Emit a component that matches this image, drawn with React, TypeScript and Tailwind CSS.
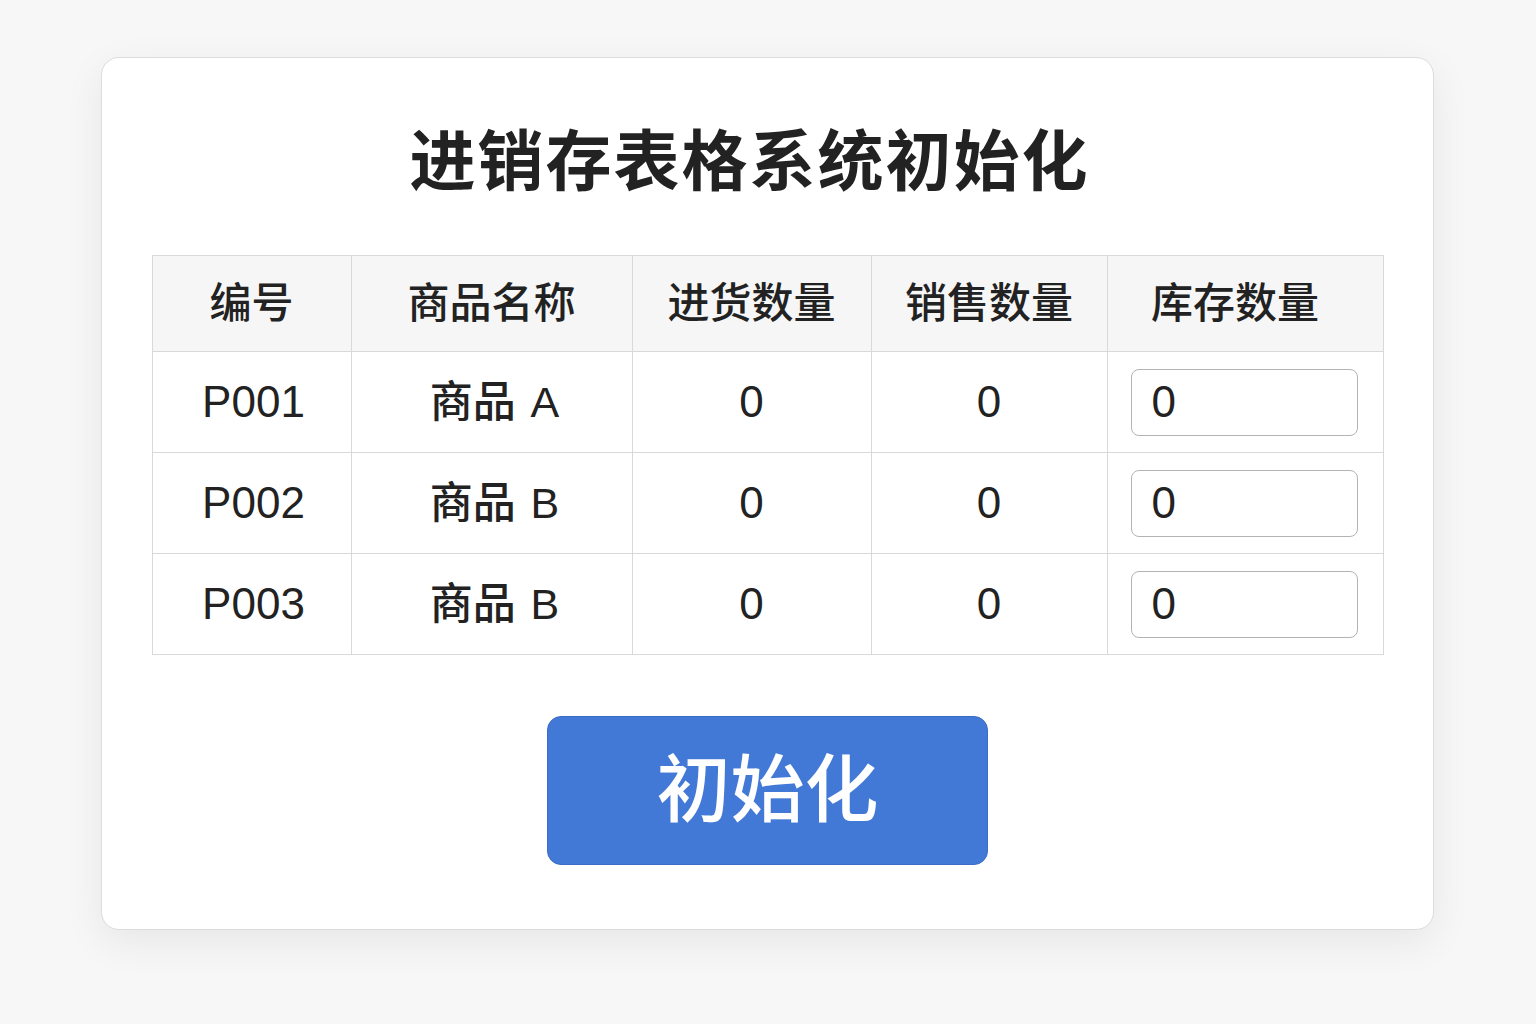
import React from "react";

const font = { fontFamily: '"Liberation Sans", "Noto Sans CJK SC", sans-serif' };

const rows = [
  { id: "P001", name: "商品 A" },
  { id: "P002", name: "商品 B" },
  { id: "P003", name: "商品 B" },
];

const headers = ["编号", "商品名称", "进货数量", "销售数量", "库存数量"];

export default function App() {
  return (
    <div
      className="w-[1536px] h-[1024px] bg-[#f7f7f7] pt-[57px] pl-[101px] text-[#222]"
      style={font}
    >
      <div className="w-[1333px] h-[873px] bg-white rounded-[18px] border border-[#dcdcdc] shadow-[0_12px_40px_rgba(0,0,0,0.07)] pt-[71px] px-[50px] flex flex-col items-center">
        <h1 className="text-[66px] leading-none font-bold tracking-[2px] text-[#222] mb-[60px] mr-[36px]">
          进销存表格系统初始化
        </h1>
        <table className="w-[1231px] border-collapse table-fixed">
          <colgroup>
            <col className="w-[199px]" />
            <col className="w-[281px]" />
            <col className="w-[239px]" />
            <col className="w-[236px]" />
            <col className="w-[276px]" />
          </colgroup>
          <thead>
            <tr className="bg-[#f6f6f6]">
              {headers.map((h, i) => (
                <th
                  key={h}
                  className={
                    i === 4
                      ? "h-[96px] border border-[#d9d9d9] text-[42px] font-medium text-[#222] text-center p-0 pr-[20px]"
                      : "h-[96px] border border-[#d9d9d9] text-[42px] font-medium text-[#222] text-center p-0"
                  }
                >
                  {h}
                </th>
              ))}
            </tr>
          </thead>
          <tbody>
            {rows.map((r) => (
              <tr key={r.id}>
                <td className="h-[101px] border border-[#d9d9d9] text-[44px] text-center p-0 pl-[4px]">{r.id}</td>
                <td className="h-[101px] border border-[#d9d9d9] text-[43px] font-medium text-center p-0 pl-[6px]">
                  {r.name.split(" ")[0]}
                  <span className="ml-[3px]">{" " + r.name.split(" ")[1]}</span>
                </td>
                <td className="h-[101px] border border-[#d9d9d9] text-[44px] text-center p-0">0</td>
                <td className="h-[101px] border border-[#d9d9d9] text-[44px] text-center p-0">0</td>
                <td className="h-[101px] border border-[#d9d9d9] p-0 pl-[23px]">
                  <input
                    defaultValue="0"
                    className="w-[227px] h-[67px] border border-[#b3b3b3] rounded-[8px] pl-[20px] text-[44px] text-[#222] outline-none"
                    style={font}
                  />
                </td>
              </tr>
            ))}
          </tbody>
        </table>
        <button className="mt-[61px] w-[441px] h-[149px] rounded-[14px] bg-[#4379d6] border border-[#3b6cc6] text-white text-[74px] font-medium leading-none">
          初始化
        </button>
      </div>
    </div>
  );
}
